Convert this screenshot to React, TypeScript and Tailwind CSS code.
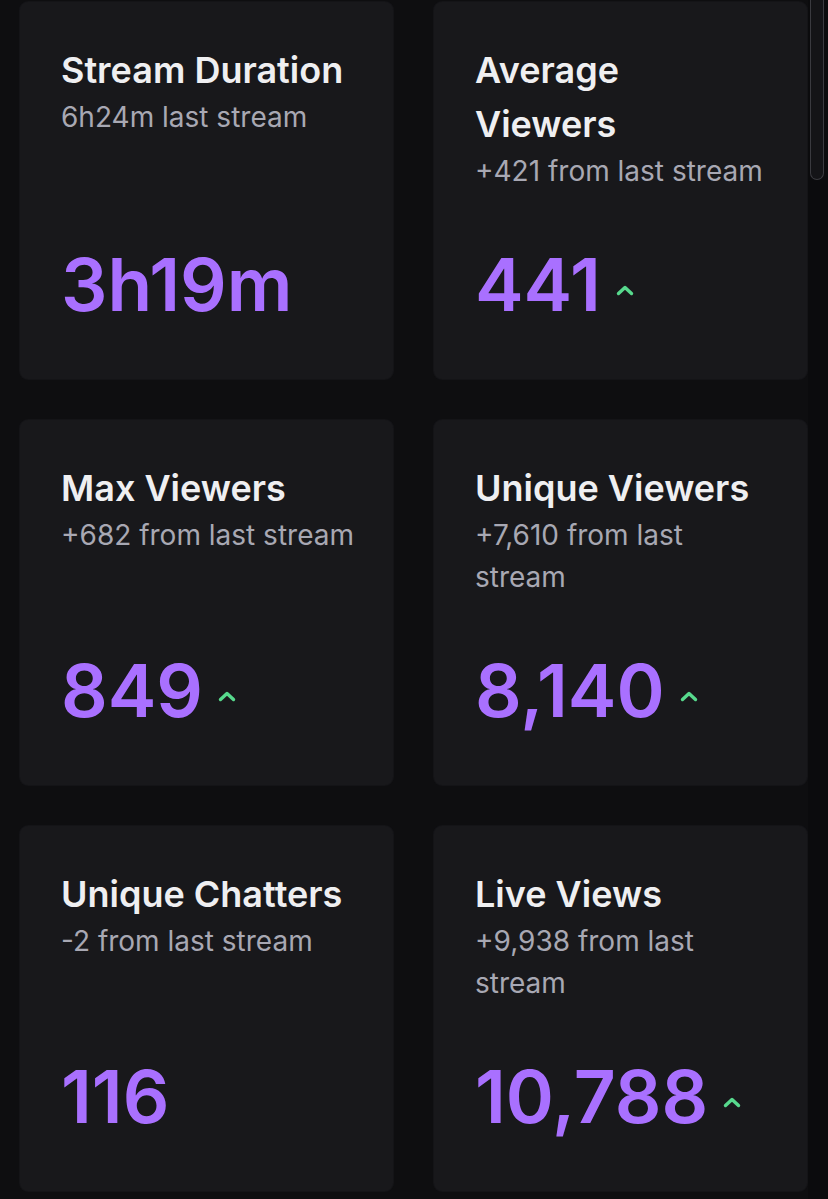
const stats = [
  { title: "Stream Duration", sub: "6h24m last stream", value: "3h19m", up: false },
  { title: "Average Viewers", sub: "+421 from last stream", value: "441", up: true },
  { title: "Max Viewers", sub: "+682 from last stream", value: "849", up: true },
  { title: "Unique Viewers", sub: "+7,610 from last stream", value: "8,140", up: true },
  { title: "Unique Chatters", sub: "-2 from last stream", value: "116", up: false },
  { title: "Live Views", sub: "+9,938 from last stream", value: "10,788", up: true },
];

function UpArrow() {
  return (
    <svg width="18" height="12" viewBox="0 0 18 12" className="ml-[15px] mt-[10px]">
      <polyline points="2.5,9.5 9,3.5 15.5,9.5" fill="none" stroke="#57d98d" strokeWidth="3.4" strokeLinecap="round" strokeLinejoin="round" />
    </svg>
  );
}

function StatCard({ title, sub, value, up }: { title: string; sub: string; value: string; up: boolean }) {
  return (
    <div className="flex flex-col rounded-lg bg-[#18181b] shadow-[0_0_0_1px_#141417] pl-[41px] pr-[32px] pt-[41px] pb-[56px]">
      <div className="mb-[55px]">
        <h3 className="max-w-[288px] text-[36px] leading-[54px] font-semibold text-[#efeff1]">{title}</h3>
        <p className="-mt-[1px] text-[28px] leading-[42px] text-[#a8a8b3]">{sub}</p>
      </div>
      <div className="mt-auto flex items-center">
        <span className="text-[73px] leading-[76px] h-[76px] font-semibold text-[#a970ff]">{value}</span>
        {up && <UpArrow />}
      </div>
    </div>
  );
}

export default function App() {
  return (
    <div className="flex h-[1199px] overflow-hidden bg-[#0e0e10] font-['Inter','Noto_Sans',sans-serif]">
      <main className="flex-1 pl-[20px] pr-[1px] pt-[2px]">
        <div className="grid grid-cols-2 gap-x-[41px] gap-y-[41px]">
          {stats.map((s) => (
            <StatCard key={s.title} {...s} />
          ))}
        </div>
      </main>
      <div className="w-[20px] bg-[#0b0b0d] pl-[2px] pr-[4px]">
        <div className="h-[180px] rounded-b-full border border-t-0 border-[#3a3a3f] bg-[#141417]" />
      </div>
    </div>
  );
}
